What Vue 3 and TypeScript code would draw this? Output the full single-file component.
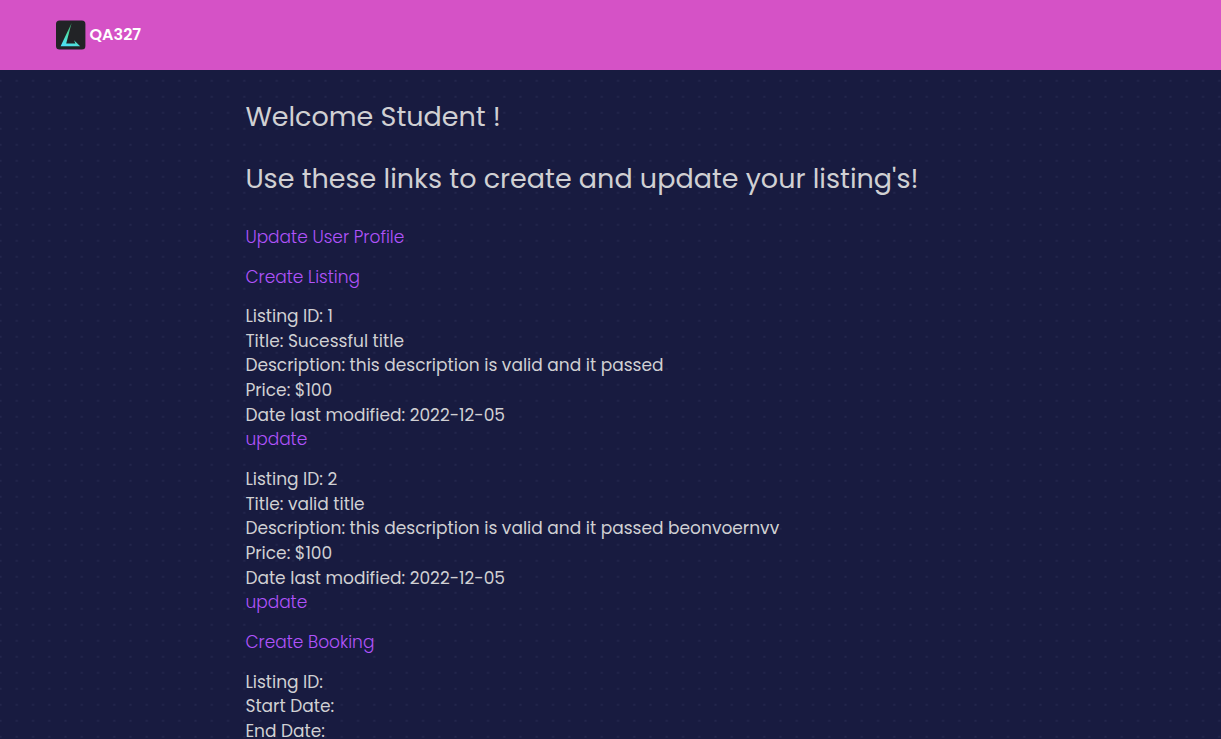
<script setup lang="ts">
interface Line {
  text: string
  link?: boolean
}

const headings: string[] = ['Welcome Student !', "Use these links to create and update your listing's!"]

const blocks: Line[][] = [
  [{ text: 'Update User Profile', link: true }],
  [{ text: 'Create Listing', link: true }],
  [
    { text: 'Listing ID: 1' },
    { text: 'Title: Sucessful title' },
    { text: 'Description: this description is valid and it passed' },
    { text: 'Price: $100' },
    { text: 'Date last modified: 2022-12-05' },
    { text: 'update', link: true },
  ],
  [
    { text: 'Listing ID: 2' },
    { text: 'Title: valid title' },
    { text: 'Description: this description is valid and it passed beonvoernvv' },
    { text: 'Price: $100' },
    { text: 'Date last modified: 2022-12-05' },
    { text: 'update', link: true },
  ],
  [{ text: 'Create Booking', link: true }],
  [{ text: 'Listing ID:' }, { text: 'Start Date:' }, { text: 'End Date:' }],
]
</script>

<template>
  <div class="page">
    <header class="navbar">
      <a class="brand">
        <svg class="logo" width="30" height="30" viewBox="0 0 30 30" aria-hidden="true">
          <defs>
            <linearGradient id="mark" x1="0.6" y1="0" x2="0.3" y2="1">
              <stop offset="0" stop-color="#3f9a62" />
              <stop offset="0.5" stop-color="#50dfab" />
              <stop offset="1" stop-color="#4ce0f4" />
            </linearGradient>
          </defs>
          <rect x="0" y="0.5" width="29.4" height="29" rx="3.5" fill="#222326" />
          <path d="M15.6 3 L4.6 26.2 H24.2 L18 20.2 L19.4 23.6 H10.2 Z" fill="url(#mark)" />
        </svg>
        <span class="brand-name">QA327</span>
      </a>
    </header>
    <main class="content">
      <h2 v-for="h in headings" :key="h">{{ h }}</h2>
      <section class="entries">
        <div v-for="(block, i) in blocks" :key="i" class="entry">
          <div v-for="line in block" :key="line.text" class="line">
            <a v-if="line.link" class="link">{{ line.text }}</a>
            <template v-else>{{ line.text }}</template>
          </div>
        </div>
      </section>
    </main>
  </div>
</template>

<style>
html,
body {
  overflow: hidden;
}
</style>

<style scoped>
.page {
  display: flex;
  flex-direction: column;
  height: 739px;
  overflow: hidden;
  font-family: Poppins, Inter, 'Open Sans', sans-serif;
  color: #d0d0d3;
  background: #181b40;
}
.navbar {
  flex: none;
  box-sizing: border-box;
  height: 70px;
  padding: 20px 55.5px 0;
  background: #d552c6;
}
.brand {
  display: flex;
  align-items: center;
  gap: 4px;
  height: 30px;
  color: #fff;
}
.brand-name {
  margin-bottom: 1px;
  font-size: 16px;
  font-weight: 600;
  line-height: 20px;
}
.content {
  flex: 1;
  padding: 30px 0 0 245.4px;
  background-image: radial-gradient(circle, #24274d 0, #22254b 0.8px, transparent 1.5px);
  background-size: 16.26px 16px;
  background-position: -7.6px 2.8px;
}
h2 {
  margin: 0 0 28px;
  font-size: 27px;
  font-weight: 400;
  line-height: 34px;
}
.entries {
  display: flex;
  flex-direction: column;
  gap: 15px;
  margin-top: 28.9px;
}
.line {
  font-size: 17.03px;
  line-height: 24.64px;
  white-space: nowrap;
}
.link {
  color: #b053fb;
  font-weight: 300;
}
</style>
